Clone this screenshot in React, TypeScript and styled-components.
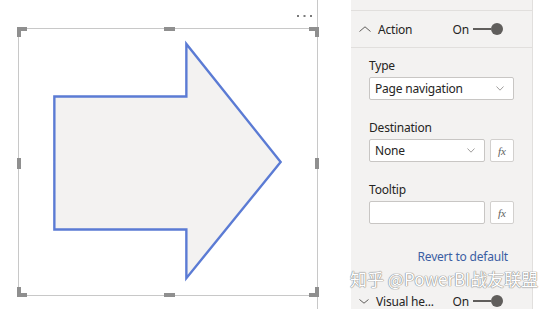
import styled, {createGlobalStyle} from "styled-components";

const GlobalStyle = createGlobalStyle`
    html, body {
        margin: 0;
        padding: 0;
        background: #ffffff;
    }
    body {
        font-family: "Segoe UI", "Noto Sans", "Liberation Sans", sans-serif;
        color: #252423;
        letter-spacing: -0.2px;
    }
`;

const StyledPage = styled.div`
    position: relative;
    display: flex;
    width: 544px;
    height: 309px;
    overflow: hidden;
    background: #ffffff;
`;

const StyledCanvas = styled.div`
    position: relative;
    box-sizing: border-box;
    flex: 0 0 318px;
    height: 100%;
    padding: 28px 0 0 18px;
    border-right: 1px solid #c8c8c8;
`;

const StyledFrame = styled.div`
    position: relative;
    box-sizing: border-box;
    width: 299px;
    height: 268px;
    border: 1px solid #c8c8c8;
    border-right: none;
`;

const StyledMore = styled.svg`
    position: absolute;
    top: -14px;
    right: 4px;
`;

const StyledCorner = styled.div<{ $v: "top" | "bottom"; $h: "left" | "right" }>`
    position: absolute;
    width: 10px;
    height: 10px;
    ${p => p.$v}: -2px;
    ${p => p.$h}: -2px;
    border-${p => p.$v}: 4px solid #8f8f8f;
    border-${p => p.$h}: 4px solid #8f8f8f;
    box-sizing: border-box;
`;

const StyledEdgeHandle = styled.div<{ $side: "top" | "bottom" | "left" | "right" }>`
    position: absolute;
    background: #8f8f8f;
    ${p => p.$side === "top" || p.$side === "bottom"
        ? `width: 11px; height: 4px; left: 145px; ${p.$side}: -2px;`
        : `width: 4px; height: 11px; top: 129px; ${p.$side}: -2px;`}
`;

const StyledShape = styled.svg`
    display: block;
    width: 100%;
    height: 100%;
`;

const StyledPanel = styled.div`
    box-sizing: border-box;
    flex: 0 0 182px;
    margin-left: 33px;
    height: 100%;
    background: #f3f2f1;
    border-right: 1px solid #e1dfdd;
    display: flex;
    flex-direction: column;
`;

const StyledStub = styled.div`
    height: 10px;
    flex: 0 0 auto;
    border-bottom: 1px solid #e1dfdd;
`;

const StyledCardHeader = styled.div<{ $divider?: boolean }>`
    flex: 0 0 auto;
    display: flex;
    align-items: center;
    height: 36px;
    padding: 0 29px 0 8px;
    font-size: 12px;
    ${p => p.$divider && "border-bottom: 1px solid #e1dfdd;"}
`;

const StyledChevron = styled.svg<{ $gap: number }>`
    flex: 0 0 auto;
    margin-right: ${p => p.$gap}px;
`;

const StyledTitle = styled.span`
    white-space: nowrap;
`;

const StyledToggle = styled.div`
    margin-left: auto;
    display: flex;
    align-items: center;
    font-size: 12px;
    color: #252423;
`;

const StyledTrack = styled.span`
    width: 18px;
    height: 2px;
    margin-left: 4px;
    background: #605e5c;
`;

const StyledKnob = styled.span`
    width: 12px;
    height: 12px;
    border-radius: 50%;
    background: #605e5c;
`;

const StyledBody = styled.div`
    flex: 0 0 auto;
    display: flex;
    flex-direction: column;
    padding: 10px 18px 0 18px;
`;

const StyledField = styled.div`
    display: flex;
    flex-direction: column;
    margin-bottom: 20px;
`;

const StyledLabel = styled.div`
    font-size: 12px;
    line-height: 16px;
    margin-bottom: 3px;
`;

const StyledRow = styled.div`
    display: flex;
    gap: 5px;
`;

const StyledSelect = styled.div`
    box-sizing: border-box;
    flex: 1 1 auto;
    height: 23px;
    display: flex;
    align-items: center;
    padding: 0 9px 0 5px;
    background: #ffffff;
    border: 1px solid #c8c6c4;
    border-radius: 2px;
    font-size: 12px;
`;

const StyledSelectText = styled.span`
    flex: 1 1 auto;
    white-space: nowrap;
`;

const StyledFx = styled.div`
    box-sizing: border-box;
    flex: 0 0 24px;
    height: 23px;
    display: flex;
    align-items: center;
    justify-content: center;
    background: #ffffff;
    border: 1px solid #d2d0ce;
    border-radius: 2px;
    font-family: "Liberation Serif", "DejaVu Serif", serif;
    font-style: italic;
    font-size: 11px;
    letter-spacing: 0;
    color: #605e5c;
`;

const StyledRevert = styled.div`
    align-self: flex-end;
    margin: 5px 6px 0 0;
    font-size: 12px;
    line-height: 16px;
    color: #3b5ea3;
`;

const StyledFooter = styled.div`
    margin-top: auto;
    height: 26px;
`;

const StyledWatermark = styled.div`
    position: absolute;
    left: 350px;
    top: 270px;
    font-family: "Noto Sans CJK SC", "Noto Sans", sans-serif;
    font-size: 17px;
    line-height: 18px;
    letter-spacing: 0;
    color: #ffffff;
    white-space: nowrap;
    text-shadow: 0 0 1px #8a8a8a, 0 0 1px #8a8a8a, 0 0 1px #8a8a8a;
`;

function Chevron({up, color = "#605e5c", w = 11, h = 6, gap = 7}: {
    up?: boolean; color?: string; w?: number; h?: number; gap?: number
}) {
    return (
        <StyledChevron width={w} height={h} viewBox={`0 0 ${w} ${h}`} $gap={gap}>
            <polyline
                points={up ? `0.5,${h - 0.5} ${w / 2},0.8 ${w - 0.5},${h - 0.5}` : `0.5,0.5 ${w / 2},${h - 0.8} ${w - 0.5},0.5`}
                fill="none"
                stroke={color}
                strokeWidth="1"
            />
        </StyledChevron>
    );
}

function Toggle() {
    return (
        <StyledToggle>
            On
            <StyledTrack/>
            <StyledKnob/>
        </StyledToggle>
    );
}

function Select({value}: { value?: string }) {
    return (
        <StyledSelect>
            <StyledSelectText>{value}</StyledSelectText>
            {value !== undefined && <Chevron w={8} h={5} color="#a19f9d" gap={0}/>}
        </StyledSelect>
    );
}

export default function App() {
    return (
        <>
            <GlobalStyle/>
            <StyledPage>
                <StyledCanvas>
                    <StyledFrame>
                        <StyledMore width="16" height="3" viewBox="0 0 16 3">
                            <rect x="0" y="0" width="2" height="2" fill="#7a7a7a"/>
                            <rect x="6.5" y="0" width="2" height="2" fill="#7a7a7a"/>
                            <rect x="13" y="0" width="2" height="2" fill="#7a7a7a"/>
                        </StyledMore>
                        <StyledShape viewBox="0 0 299 268">
                            <polygon
                                points="35,68 168,68 168,15 263,134 168,251 168,202 35,202"
                                fill="#f3f2f1"
                                stroke="#5b7bd4"
                                strokeWidth="2.4"
                                strokeLinejoin="miter"
                            />
                        </StyledShape>
                        <StyledCorner $v="top" $h="left"/>
                        <StyledCorner $v="top" $h="right"/>
                        <StyledCorner $v="bottom" $h="left"/>
                        <StyledCorner $v="bottom" $h="right"/>
                        <StyledEdgeHandle $side="top"/>
                        <StyledEdgeHandle $side="bottom"/>
                        <StyledEdgeHandle $side="left"/>
                        <StyledEdgeHandle $side="right"/>
                    </StyledFrame>
                </StyledCanvas>

                <StyledPanel>
                    <StyledStub/>
                    <StyledCardHeader $divider>
                        <Chevron up w={12} h={6}/>
                        <StyledTitle>Action</StyledTitle>
                        <Toggle/>
                    </StyledCardHeader>
                    <StyledBody>
                        <StyledField>
                            <StyledLabel>Type</StyledLabel>
                            <Select value="Page navigation"/>
                        </StyledField>
                        <StyledField>
                            <StyledLabel>Destination</StyledLabel>
                            <StyledRow>
                                <Select value="None"/>
                                <StyledFx>fx</StyledFx>
                            </StyledRow>
                        </StyledField>
                        <StyledField>
                            <StyledLabel>Tooltip</StyledLabel>
                            <StyledRow>
                                <Select/>
                                <StyledFx>fx</StyledFx>
                            </StyledRow>
                        </StyledField>
                        <StyledRevert>Revert to default</StyledRevert>
                    </StyledBody>
                    <StyledFooter>
                        <StyledCardHeader>
                            <Chevron w={10} h={5}/>
                            <StyledTitle>Visual he...</StyledTitle>
                            <Toggle/>
                        </StyledCardHeader>
                    </StyledFooter>
                </StyledPanel>

                <StyledWatermark>知乎 @PowerBI战友联盟</StyledWatermark>
            </StyledPage>
        </>
    );
}
